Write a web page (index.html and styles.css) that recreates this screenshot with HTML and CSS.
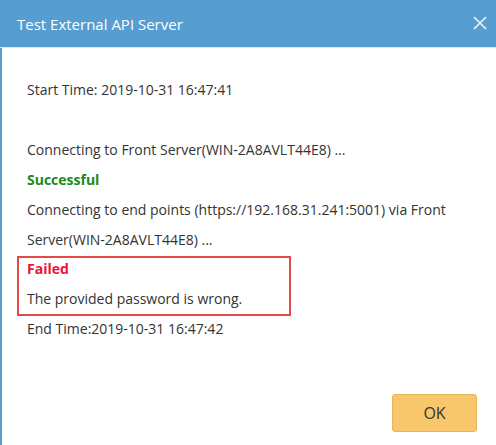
FILE: index.html
```html
<!DOCTYPE html>
<html>
<head>
<meta charset="utf-8">
<link rel="stylesheet" href="styles.css">
</head>
<body>
<div class="dialog">
  <div class="header">
    <span class="title">Test External API Server</span>
    <svg class="close" width="14" height="14" viewBox="0 0 14 14"><path d="M1 1 L13 13 M13 1 L1 13" stroke="#eef4fa" stroke-width="1.6" fill="none"/></svg>
  </div>
  <div class="content">
    <div class="log">
      <div class="line">Start Time: 2019-10-31 16:47:41</div>
      <div class="line">&nbsp;</div>
      <div class="line">Connecting to Front Server(WIN-2A8AVLT44E8) ...</div>
      <div class="line ok">Successful</div>
      <div class="line">Connecting to end points (https://192.168.31.241:5001) via Front Server(WIN-2A8AVLT44E8) ...</div>
      <div class="box">
        <div class="line fail">Failed</div>
        <div class="line">The provided password is wrong.</div>
      </div>
      <div class="line end">End Time:2019-10-31 16:47:42</div>
    </div>
    <div class="footer">
      <button class="btn">OK</button>
    </div>
  </div>
</div>
</body>
</html>
```
FILE: styles.css
```css
html, body {
  margin: 0;
  padding: 0;
  background: #fff;
}
body {
  font-family: "Open Sans", "Noto Sans", sans-serif;
  color: #333;
  width: 496px;
  height: 445px;
  overflow: hidden;
}
.dialog {
  display: flex;
  flex-direction: column;
  height: 445px;
}
.header {
  height: 48px;
  background: #569dd1;
  display: flex;
  align-items: center;
  justify-content: space-between;
  padding: 0 9px 0 17px;
  border-bottom: 1px solid #d9e8f4;
  box-sizing: border-box;
}
.title {
  color: #fff;
  font-size: 15px;
  line-height: 48px;
}
.close {
  display: block;
  margin-top: -2px;
}
.content {
  flex: 1;
  border-left: 2px solid #569dd1;
  padding: 27px 19px 0 25px;
  display: flex;
  flex-direction: column;
}
.log {
  font-size: 14px;
  line-height: 30px;
  width: 450px;
}
.line {
  white-space: normal;
}
.ok {
  color: #1c8a1c;
  font-weight: 700;
}
.fail {
  color: #ee1133;
  font-weight: 700;
}
.box {
  border: 2px solid #e24a4a;
  margin: 1px 0 0 -10px;
  padding: 0 8px;
  width: 254px;
}
.box .line:first-child {
  margin-top: -4px;
}
.end {
  margin-top: -2px;
}
.footer {
  display: flex;
  justify-content: flex-end;
  margin-top: 50px;
}
.btn {
  width: 85px;
  height: 38px;
  background: #f8c66b;
  border: 1px solid #e9b25a;
  border-radius: 3px;
  font-family: "Open Sans", "Noto Sans", sans-serif;
  font-size: 16px;
  color: #333;
  padding: 0;
}
```
